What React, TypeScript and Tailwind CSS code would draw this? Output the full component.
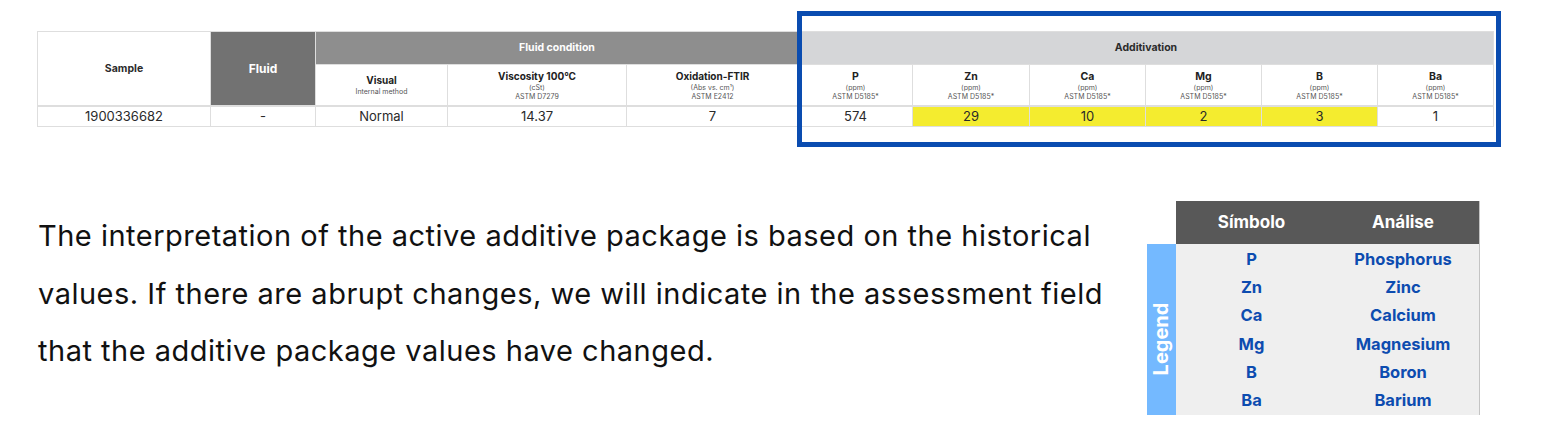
const font = { fontFamily: "Inter, 'Noto Sans', sans-serif" };

const subCols = [
  { name: "Visual", unit: null, method: "Internal method" },
  { name: "Viscosity 100°C", unit: "(cSt)", method: "ASTM D7279" },
  { name: "Oxidation-FTIR", unit: "(Abs vs. cm¹)", method: "ASTM E2412" },
];

const elements = ["P", "Zn", "Ca", "Mg", "B", "Ba"];

const dataRow = [
  { v: "1900336682" },
  { v: "-" },
  { v: "Normal" },
  { v: "14.37" },
  { v: "7" },
  { v: "574" },
  { v: "29", hl: true },
  { v: "10", hl: true },
  { v: "2", hl: true },
  { v: "3", hl: true },
  { v: "1" },
];

const legend = [
  ["P", "Phosphorus"],
  ["Zn", "Zinc"],
  ["Ca", "Calcium"],
  ["Mg", "Magnesium"],
  ["B", "Boron"],
  ["Ba", "Barium"],
];

function ResultsTable() {
  return (
    <div className="grid grid-cols-[172px_104px_131px_178px_171px_113px_116px_115px_115px_115px_115px] grid-rows-[32px_40px_20px] gap-px bg-[#dedede] p-px w-[1457px]">
      <div className="row-span-2 bg-white flex items-center justify-center text-[10.5px] font-bold text-[#2b2b2b]">
        Sample
      </div>
      <div className="row-span-2 bg-[#727272] flex items-center justify-center text-[12px] font-bold text-white">
        Fluid
      </div>
      <div className="col-span-3 bg-[#8e8e8e] flex items-center justify-center text-[10.5px] font-bold text-white">
        Fluid condition
      </div>
      <div className="col-span-6 bg-[#d5d6d8] flex items-center justify-center text-[10.5px] font-bold text-[#2b2b2b]">
        Additivation
      </div>

      {subCols.map((c) => (
        <div key={c.name} className="bg-white flex flex-col items-center justify-center leading-[9px] text-[#555]">
          <span className="text-[10px] font-bold text-[#222] leading-[13px]">{c.name}</span>
          {c.unit && <span className="text-[7px]">{c.unit}</span>}
          <span className="text-[7px]">{c.method}</span>
        </div>
      ))}
      {elements.map((e) => (
        <div key={e} className="bg-white flex flex-col items-center justify-center leading-[9px] text-[#555]">
          <span className="text-[10.5px] font-bold text-[#222] leading-[13px]">{e}</span>
          <span className="text-[7px]">(ppm)</span>
          <span className="text-[7px]">ASTM D5185*</span>
        </div>
      ))}

      {dataRow.map((d, i) => (
        <div
          key={i}
          className={`${d.hl ? "bg-[#f4ec2f]" : "bg-white"} flex items-center justify-center text-[13px] text-[#2a2a2a] border-t border-[#dedede] pt-px`}
        >
          {d.v}
        </div>
      ))}
    </div>
  );
}

function Legend() {
  return (
    <div className="grid grid-cols-[29px_151px_152px] grid-rows-[43px_171px] border-r border-[#c4c4c4]">
      <div className="bg-white" />
      <div className="bg-[#585858] flex items-center justify-center text-[17px] font-bold text-white">Símbolo</div>
      <div className="bg-[#585858] flex items-center justify-center text-[17px] font-bold text-white">Análise</div>

      <div className="bg-[#74b9ff] flex items-center justify-center pt-[18px]">
        <span className="-rotate-90 text-[20px] font-bold text-white whitespace-nowrap">Legend</span>
      </div>
      <div className="col-span-2 bg-[#efefef] grid grid-cols-[151px_152px] grid-rows-6 pt-px">
        {legend.map(([s, n]) => (
          <div key={s} className="contents">
            <div className="flex items-center justify-center text-[16.5px] font-bold text-[#0d4cb0]">{s}</div>
            <div className="flex items-center justify-center text-[16.5px] font-bold text-[#0d4cb0]">{n}</div>
          </div>
        ))}
      </div>
    </div>
  );
}

export default function App() {
  return (
    <div className="relative w-[1550px] h-[436px] bg-white overflow-hidden" style={font}>
      <div className="pt-[31px] pl-[37px]">
        <ResultsTable />
      </div>

      {/* highlight box around the additive columns */}
      <div className="absolute left-[797px] top-[11px] w-[704px] h-[136px] border-[5px] border-[#0a4cb0] pointer-events-none" />

      <div className="flex items-start mt-[74px] pl-[38px]">
        <p className="w-[1109px] mt-[6px] text-[29px] tracking-[0.5px] leading-[57.5px] text-[#111]">
          The interpretation of the active additive package is based on the historical
          <br />
          values. If there are abrupt changes, we will indicate in the assessment field
          <br />
          that the additive package values have changed.
        </p>
        <Legend />
      </div>
    </div>
  );
}
